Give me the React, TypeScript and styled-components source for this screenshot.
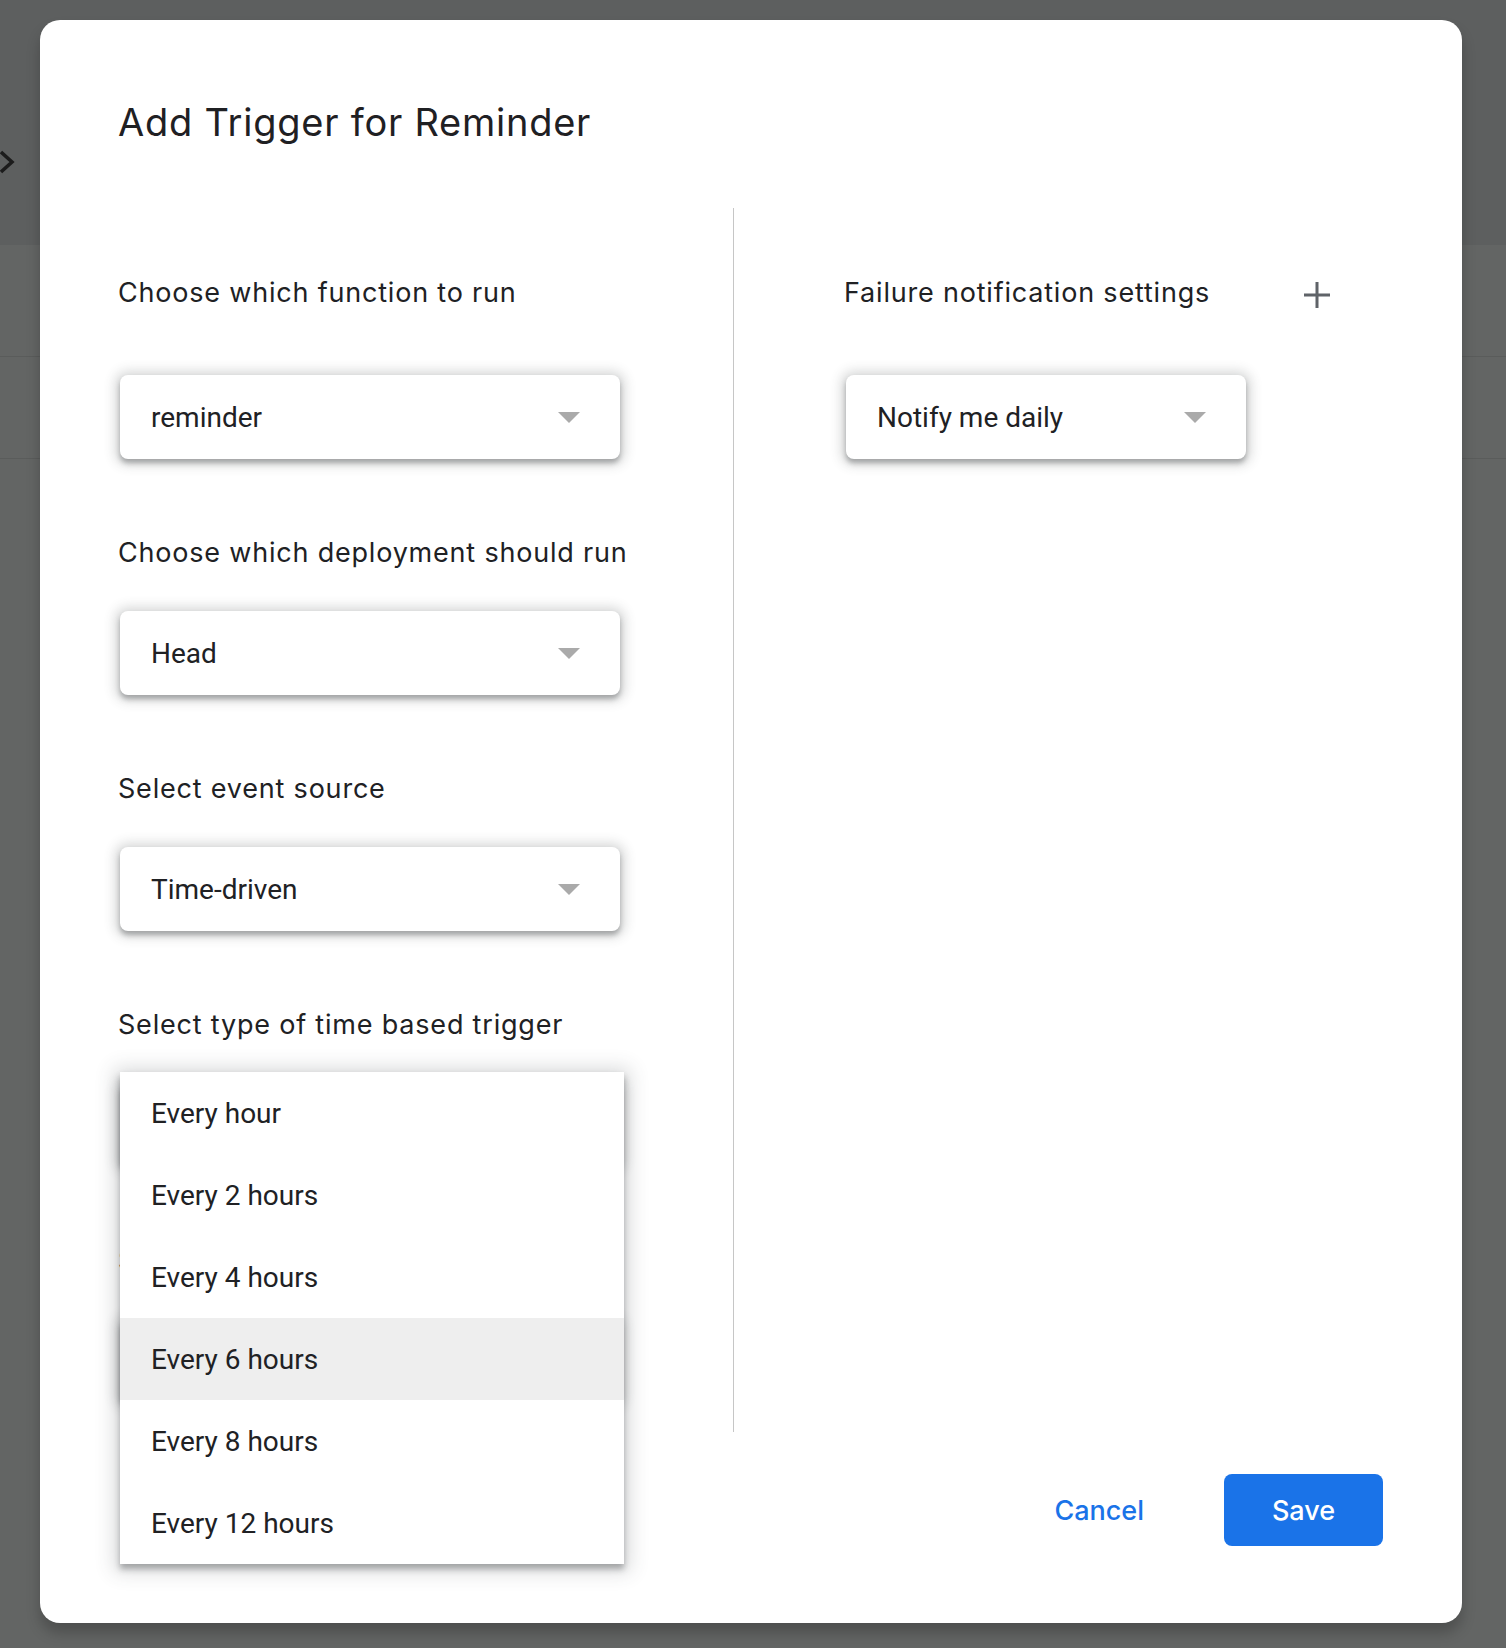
import React from "react";
import styled, { createGlobalStyle } from "styled-components";

const GlobalStyle = createGlobalStyle`
  html, body { margin: 0; padding: 0; }
  body {
    background: #636564;
    font-family: Inter, "Liberation Sans", sans-serif;
    -webkit-font-smoothing: antialiased;
  }
  * { box-sizing: border-box; }
`;

const Screen = styled.div`
  position: relative;
  width: 1506px;
  height: 1648px;
  overflow: hidden;
  background: #636564;
`;

const Backdrop = styled.div`
  display: flex;
  flex-direction: column;
  height: 100%;
`;

const BackdropHeader = styled.div`
  height: 245px;
  background: #5d5f5f;
  padding-top: 149px;
  color: #1c1c1c;
`;

const BackdropBand = styled.div<{ $h: number }>`
  height: ${(p) => p.$h}px;
  border-bottom: 1px solid #5a5c5b;
  background: #636564;
`;

const BackdropRest = styled.div`
  flex: 1;
  background: #636564;
`;

const Dialog = styled.div`
  position: absolute;
  left: 40px;
  top: 20px;
  width: 1422px;
  display: flex;
  flex-direction: column;
  background: #ffffff;
  border-radius: 20px;
  padding: 78px 0 77px 80px;
  box-shadow: 0 10px 14px rgba(0, 0, 0, 0.22);
`;

const Title = styled.h1`
  margin: 0 0 0 -2px;
  font-family: Inter, "Liberation Sans", sans-serif;
  font-weight: 400;
  font-size: 38px;
  line-height: 48px;
  letter-spacing: 0.75px;
  color: #1f2023;
`;

const Columns = styled.div`
  margin-top: 62px;
  display: grid;
  grid-template-columns: 613px 1px 1fr;
`;

const LeftColumn = styled.div`
  display: flex;
  flex-direction: column;
  gap: 78px;
  padding: 69px 0 29px 0;
`;

const RightColumn = styled.div`
  display: flex;
  flex-direction: column;
  padding: 69px 0 0 112px;
`;

const Divider = styled.div`
  background: #c6c6c6;
  width: 1px;
`;

const Field = styled.div<{ $gap: number }>`
  display: flex;
  flex-direction: column;
  gap: ${(p) => p.$gap}px;
`;

const FieldHeader = styled.div`
  display: flex;
  align-items: center;
  justify-content: space-between;
  width: 485px;
  height: 32px;
`;

const Label = styled.div`
  margin-left: -2px;
  font-family: Inter, "Liberation Sans", sans-serif;
  font-size: 27px;
  line-height: 32px;
  letter-spacing: 0.8px;
  color: #202124;
  white-space: nowrap;
`;

const PlusButton = styled.button`
  display: flex;
  align-items: center;
  justify-content: center;
  width: 28px;
  height: 28px;
  margin-top: 3px;
  padding: 0;
  border: none;
  background: transparent;
  color: #5f6368;
`;

const SelectWrap = styled.div`
  position: relative;
`;

const SelectBox = styled.div<{ $w: number }>`
  width: ${(p) => p.$w}px;
  height: 84px;
  display: flex;
  align-items: center;
  justify-content: space-between;
  padding: 0 40px 0 31px;
  background: #ffffff;
  border-radius: 8px;
  box-shadow: 0 4px 5px rgba(60, 64, 67, 0.36), 0 1px 12px 5px rgba(60, 64, 67, 0.2);
  font-family: Roboto, "Liberation Sans", sans-serif;
  font-size: 28px;
  color: #202124;
`;

const Arrow = styled.span`
  width: 0;
  height: 0;
  border-left: 11px solid transparent;
  border-right: 11px solid transparent;
  border-top: 11px solid #aaaaaa;
`;

const Menu = styled.ul`
  position: absolute;
  z-index: 2;
  top: -11px;
  left: 0;
  width: 504px;
  margin: 0;
  padding: 0;
  list-style: none;
  background: #ffffff;
  box-shadow: 0 5px 6px rgba(60, 64, 67, 0.38), 0 2px 18px 6px rgba(60, 64, 67, 0.19);
`;

const MenuItem = styled.li<{ $active?: boolean }>`
  height: 82px;
  display: flex;
  align-items: center;
  padding-left: 31px;
  background: ${(p) => (p.$active ? "#eeeeee" : "transparent")};
  font-family: Roboto, "Liberation Sans", sans-serif;
  font-size: 28px;
  color: #202124;
`;

const Footer = styled.div`
  margin-top: 42px;
  padding-right: 79px;
  display: flex;
  justify-content: flex-end;
  align-items: center;
  gap: 56px;
`;

const TextButton = styled.button`
  height: 72px;
  padding: 0 24px;
  border: none;
  background: transparent;
  color: #1a73e8;
  font-family: Inter, "Liberation Sans", sans-serif;
  font-weight: 500;
  font-size: 27px;
`;

const PrimaryButton = styled.button`
  width: 159px;
  height: 72px;
  border: none;
  border-radius: 8px;
  background: #1a73e8;
  color: #ffffff;
  font-family: Inter, "Liberation Sans", sans-serif;
  font-weight: 500;
  font-size: 27px;
`;

const Select = ({ value, width = 500 }: { value: string; width?: number }) => (
  <SelectBox $w={width}>
    <span>{value}</span>
    <Arrow />
  </SelectBox>
);

const options = [
  "Every hour",
  "Every 2 hours",
  "Every 4 hours",
  "Every 6 hours",
  "Every 8 hours",
  "Every 12 hours",
];

export default function App() {
  return (
    <>
      <GlobalStyle />
      <Screen>
        <Backdrop>
          <BackdropHeader>
            <svg width="16" height="26" viewBox="0 0 16 26">
              <path d="M1 3 L12 13 L1 23" fill="none" stroke="currentColor" strokeWidth="3.5" />
            </svg>
          </BackdropHeader>
          <BackdropBand $h={112} />
          <BackdropBand $h={102} />
          <BackdropRest />
        </Backdrop>

        <Dialog>
          <Title>Add Trigger for Reminder</Title>
          <Columns>
            <LeftColumn>
              <Field $gap={66}>
                <Label>Choose which function to run</Label>
                <Select value="reminder" />
              </Field>
              <Field $gap={42}>
                <Label>Choose which deployment should run</Label>
                <Select value="Head" />
              </Field>
              <Field $gap={42}>
                <Label>Select event source</Label>
                <Select value="Time-driven" />
              </Field>
              <Field $gap={42}>
                <Label>Select type of time based trigger</Label>
                <SelectWrap>
                  <Select value="Hour timer" />
                  <Menu>
                    {options.map((o) => (
                      <MenuItem key={o} $active={o === "Every 6 hours"}>
                        {o}
                      </MenuItem>
                    ))}
                  </Menu>
                </SelectWrap>
              </Field>
              <Field $gap={42}>
                <Label>Select hour interval</Label>
                <Select value="Every hour" />
              </Field>
            </LeftColumn>
            <Divider />
            <RightColumn>
              <Field $gap={66}>
                <FieldHeader>
                  <Label>Failure notification settings</Label>
                  <PlusButton aria-label="Add">
                    <svg width="28" height="28" viewBox="0 0 28 28">
                      <path d="M14 1 V27 M1 14 H27" stroke="currentColor" strokeWidth="3" />
                    </svg>
                  </PlusButton>
                </FieldHeader>
                <Select value="Notify me daily" width={400} />
              </Field>
            </RightColumn>
          </Columns>
          <Footer>
            <TextButton>Cancel</TextButton>
            <PrimaryButton>Save</PrimaryButton>
          </Footer>
        </Dialog>
      </Screen>
    </>
  );
}
